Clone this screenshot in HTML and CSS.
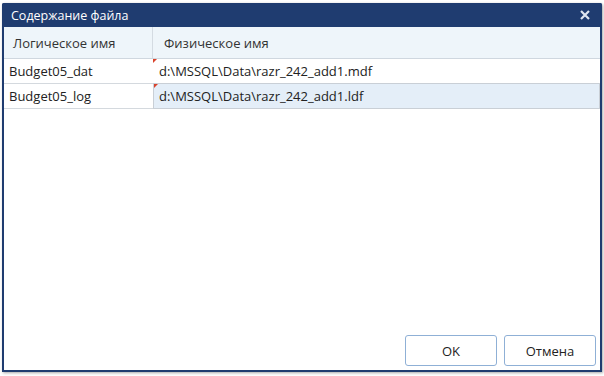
FILE: index.html
```html
<!DOCTYPE html>
<html>
<head>
<meta charset="utf-8">
<link rel="stylesheet" href="styles.css">
</head>
<body>
<div class="dialog">
  <div class="titlebar">
    <span class="title">Содержание файла</span>
    <svg class="close" width="10" height="10" viewBox="0 0 10 10"><path d="M1 1L9 9M9 1L1 9" stroke="#dfe6f0" stroke-width="2.2"/></svg>
  </div>
  <div class="body">
    <div class="grid">
      <div class="row head">
        <div class="cell c1">Логическое имя</div>
        <div class="cell c2">Физическое имя</div>
      </div>
      <div class="row">
        <div class="cell c1">Budget05_dat</div>
        <div class="cell c2 mark">d:\MSSQL\Data\razr_242_add1.mdf</div>
      </div>
      <div class="row">
        <div class="cell c1">Budget05_log</div>
        <div class="cell c2 mark sel">d:\MSSQL\Data\razr_242_add1.ldf</div>
      </div>
    </div>
    <div class="spacer"></div>
    <div class="buttons">
      <button class="btn">OK</button>
      <button class="btn">Отмена</button>
    </div>
  </div>
</div>
</body>
</html>
```

FILE: styles.css
```css
html, body { margin: 0; padding: 0; background: #ffffff; }
body { width: 604px; height: 376px; font-family: "Open Sans", "Noto Sans", sans-serif; font-size: 13px; color: #222; }
.dialog {
  position: relative;
  margin: 3px 0 0 2px;
  width: 600px;
  height: 369px;
  box-sizing: border-box;
  border: 2px solid #1f3c70;
  border-top: none;
  display: flex;
  flex-direction: column;
  box-shadow: 1px 1px 3px rgba(0,0,0,0.35);
  border-radius: 2px 2px 0 0;
}
.titlebar {
  height: 24px;
  flex: none;
  box-sizing: border-box;
  background: #1f3c70;
  margin: 0 -2px;
  display: flex;
  align-items: center;
  justify-content: space-between;
  padding: 0 12px 0 9px;
  color: #fff;
  font-size: 12.5px;
  border-radius: 2px 2px 0 0;
}
.body { flex: 1; display: flex; flex-direction: column; }
.grid { display: flex; flex-direction: column; }
.row { display: flex; height: 24px; border-bottom: 1px solid #d4d9de; }
.row.head { height: 31px; background: #eef5fa; border-bottom: 1px solid #cfd7df; }
.cell { display: flex; align-items: center; white-space: nowrap; position: relative; box-sizing: border-box; }
.c1 { width: 149px; padding-left: 5px; }
.head .c1 { padding-left: 9px; color: #333; border-right: 1px solid #d4dbe2; }
.c2 { flex: 1; padding-left: 6px; }
.head .c2 { padding-left: 11px; color: #333; }
.mark::before {
  content: "";
  position: absolute;
  left: 0; top: 0;
  border-style: solid;
  border-width: 4px 4px 0 0;
  border-color: #d9432c transparent transparent transparent;
}
.sel { background: #e4eef8; border: 1px solid #c9cfd6; margin-top: -1px; margin-bottom: -1px; padding-left: 5px; }
.spacer { flex: 1; }
.buttons { display: flex; justify-content: flex-end; gap: 7px; padding: 0 4px 4px 0; }
.btn {
  width: 92px; height: 31px;
  background: #fff;
  border: 1px solid #8fb0d6;
  border-radius: 3px;
  font-family: "Open Sans", "Noto Sans", sans-serif;
  font-size: 13px;
  color: #222;
}
```
